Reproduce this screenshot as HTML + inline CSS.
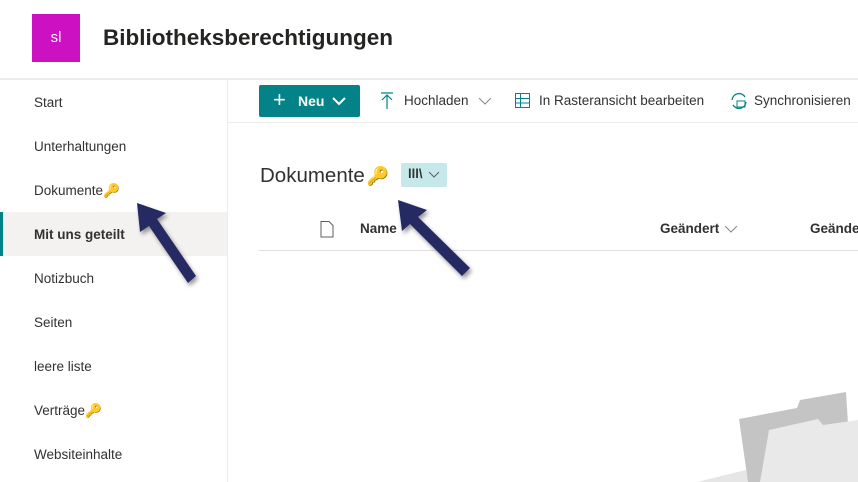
<!DOCTYPE html>
<html><head><meta charset="utf-8"><style>
body{margin:0;width:858px;height:482px;overflow:hidden;background:#fff;font-family:"Segoe UI","Liberation Sans",sans-serif;color:#323130;position:relative}
.a{position:absolute;white-space:nowrap}
.nav{font-size:13.5px}
</style></head><body>
<div class="a" style="left:32px;top:14px;width:48px;height:48px;background:#cc11c3;color:#fff;font-size:15px;line-height:48px;text-align:center">sl</div>
<div class="a" style="left:103px;top:25px;font-size:22.5px;font-weight:bold;color:#252423">Bibliotheksberechtigungen</div>
<div class="a" style="left:0;top:78px;width:858px;height:2px;background:#edebe9"></div>
<div class="a" style="left:227px;top:80px;width:1px;height:402px;background:#edebe9"></div>
<div class="a" style="left:0;top:212px;width:227px;height:44px;background:#f3f2f1"></div>
<div class="a" style="left:0;top:212px;width:3px;height:44px;background:#038387"></div>
<div class="a nav" style="left:34px;top:95px">Start</div>
<div class="a nav" style="left:34px;top:139px">Unterhaltungen</div>
<div class="a nav" style="left:34px;top:183px">Dokumente<span style="color:#f0b400">🔑</span></div>
<div class="a nav" style="left:34px;top:227px;font-weight:bold">Mit uns geteilt</div>
<div class="a nav" style="left:34px;top:271px">Notizbuch</div>
<div class="a nav" style="left:34px;top:315px">Seiten</div>
<div class="a nav" style="left:34px;top:359px">leere liste</div>
<div class="a nav" style="left:34px;top:403px">Verträge<span style="color:#f0b400">🔑</span></div>
<div class="a nav" style="left:34px;top:447px">Websiteinhalte</div>
<div class="a" style="left:228px;top:122px;width:630px;height:1px;background:#edebe9"></div>
<div class="a" style="left:259px;top:85px;width:101px;height:32px;background:#038387;border-radius:2px;color:#fff;font-size:14px;font-weight:bold;line-height:32px"><span style="position:absolute;left:14px;font-size:22px;font-weight:normal;top:-1px">+</span><span style="position:absolute;left:39px">Neu</span><svg style="position:absolute;left:73px;top:11px" width="14" height="10"><path d="M1 2l6 6 6-6" stroke="#fff" stroke-width="2" fill="none"/></svg></div>
<svg class="a" style="left:380px;top:92px" width="14" height="18"><path d="M1 1h12M7 3v14M2 8l5-5 5 5" stroke="#038387" fill="none" stroke-width="1.2"/></svg>
<div class="a" style="left:404px;top:93px;font-size:13.5px">Hochladen</div>
<svg class="a" style="left:478px;top:96px" width="14" height="10"><path d="M1 2l6 6 6-6" stroke="#8a8886" fill="none"/></svg>
<svg class="a" style="left:514px;top:92px" width="17" height="17"><path d="M1.5 1.5h14v14h-14zM1.5 6.5h14M1.5 11h14M6.5 1.5v14" stroke="#038387" fill="none"/></svg>
<div class="a" style="left:539px;top:93px;font-size:13.5px">In Rasteransicht bearbeiten</div>
<svg class="a" style="left:729px;top:91px" width="20" height="20"><path d="M3 9a7 7 0 0 1 13-3M17 11a7 7 0 0 1-13 3" stroke="#038387" fill="none" stroke-width="1.3"/><rect x="8" y="10" width="8" height="6" stroke="#038387" fill="none"/></svg>
<div class="a" style="left:754px;top:93px;font-size:13.5px">Synchronisieren</div>
<div class="a" style="left:260px;top:164px;font-size:20.5px;color:#323130">Dokumente<span style="color:#f0b400;font-size:18px;margin-left:2px">🔑</span></div>
<div class="a" style="left:401px;top:163px;width:46px;height:24px;background:#c7e8ea;border-radius:2px"><span style="position:absolute;left:7px;top:3px;font-size:13px;font-weight:bold">lll\</span><svg style="position:absolute;left:27px;top:8px" width="12" height="8"><path d="M1 1l5 5 5-5" stroke="#605e5c" fill="none"/></svg></div>
<svg class="a" style="left:320px;top:221px" width="14" height="17"><path d="M1 .5h8l4 4V16H1z" stroke="#605e5c" fill="none"/></svg>
<div class="a" style="left:360px;top:221px;font-size:13.5px;font-weight:bold">Name</div>
<div class="a" style="left:660px;top:221px;font-size:13.5px;font-weight:bold">Geändert</div>
<svg class="a" style="left:724px;top:225px" width="14" height="9"><path d="M1 1l6 6 6-6" stroke="#8a8886" fill="none"/></svg>
<div class="a" style="left:810px;top:221px;font-size:13.5px;font-weight:bold">Geänder</div>
<div class="a" style="left:259px;top:250px;width:599px;height:1px;background:#e1dfdd"></div>
<svg class="a" style="left:0;top:0" width="858" height="482">
<polygon points="697,482 746,470 750,482" fill="#e6e6e6"/>
<polygon points="739,419 797,408 800,400 846,392 849,440 760,482 748,482" fill="#c4c4c4"/>
<polygon points="769,430 818,419 823,425 858,420 858,482 760,482" fill="#e9e9e9"/>
<g fill="#252a63" style="filter:drop-shadow(2px 3px 2px rgba(0,0,0,.4))">
<path d="M137,203 L166,213 L157,219 L196,276 L188,283 L149,226 L140,232 Z"/>
<path d="M398,200 L427,210 L418,217 L470,268 L462,276 L410,224 L402,231 Z"/>
</g>
</svg>
</body></html>
